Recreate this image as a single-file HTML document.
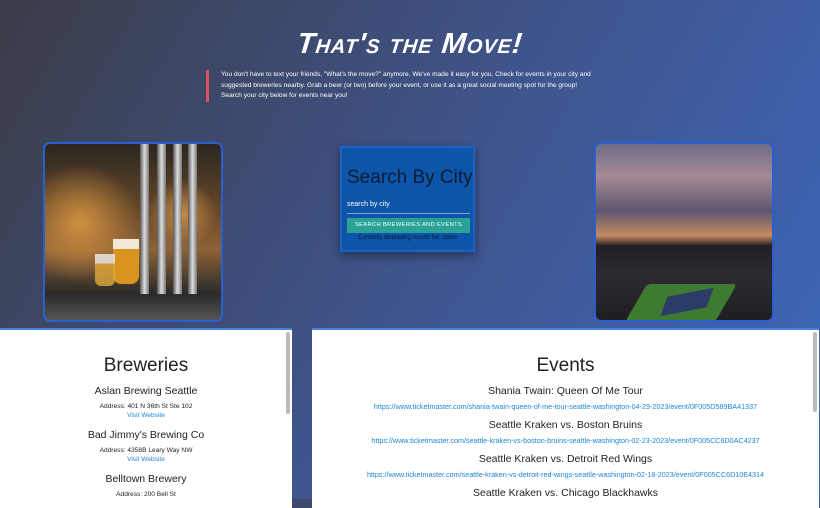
<!DOCTYPE html>
<html><head><style>
*{margin:0;padding:0;box-sizing:border-box}
body{width:820px;height:499px;overflow:hidden;font-family:"Liberation Sans",sans-serif;background:linear-gradient(120deg,#3b3d48 0%,#3f5285 45%,#3e68bf 100%);position:relative}
h1{position:absolute;top:28px;left:0;width:820px;text-align:center;color:#fff;font-size:29px;font-weight:bold;font-style:italic;font-variant:small-caps;letter-spacing:1px;transform:skewX(-6deg)}
.intro{position:absolute;left:206px;top:70px;width:388px;border-left:3px solid #d9525f;padding-left:12px;color:#fff;font-size:6.6px;line-height:10.5px}
.img{position:absolute;top:142px;width:180px;height:180px;border:2px solid #2a5fd0;border-radius:7px;overflow:hidden}
.beer{left:43px;background:radial-gradient(circle at 78% 40%,#c88a45 0,transparent 20%),radial-gradient(circle at 20% 45%,#d09040 0,transparent 35%),linear-gradient(180deg,#2b2620 0%,#6b4a2a 40%,#8d6236 60%,#2a2a2a 85%,#555 100%)}
.tap{position:absolute;top:0;height:150px;width:9px;background:linear-gradient(90deg,#555,#ddd,#777)}
.stad{left:594px;background:linear-gradient(180deg,#6e6c88 0%,#a68a96 18%,#5d5670 38%,#c58a60 52%,#201d25 58%,#2d2b30 75%,#1e1e22 100%)}
.search{position:absolute;left:340px;top:146px;width:135px;height:106px;background:#0d55a8;border:2px solid #1c62c8;box-shadow:0 4px 10px rgba(0,0,0,.4)}
.search h2{font-weight:normal;font-size:19px;color:#0d1c33;margin:19px 0 0 5px}
.search .in{font-size:7px;color:#fff;margin:12px 0 0 5px;padding-bottom:5px;border-bottom:1px solid #7fa2cf;width:123px}
.search .btn{margin:4px 0 0 5px;width:123px;height:15px;background:#2aa396;color:#fff;font-size:5.8px;text-align:center;line-height:15px;letter-spacing:.3px}
.search .cur{font-size:6px;color:#0d1c33;text-align:center;margin-top:2px}
.panel{position:absolute;top:328px;height:180px;background:#fff;border-top:2px solid #4a7fe0;text-align:center;color:#222}
.p1{left:0;width:292px}
.p2{left:312px;width:507px}
.sb{position:absolute;right:2px;top:2px;width:4px;height:82px;background:#bbb;border-radius:2px}
.panel h3{font-weight:normal;font-size:19px;margin-top:25px;margin-bottom:8px}
.name{font-size:10.5px;margin-bottom:6px}
.addr{font-size:6.6px;margin-bottom:2px}
.link{font-size:6.6px;color:#1d86d8;margin-bottom:10px}
.p2 .name{margin-bottom:5px}
.p2 .link{margin-bottom:8px;font-size:7.2px}
</style></head><body>
<h1>That's the Move!</h1>
<div class="intro">You don't have to text your friends, "What's the move?" anymore. We've made it easy for you. Check for events in your city and suggested breweries nearby. Grab a beer (or two) before your event, or use it as a great social meeting spot for the group! Search your city below for events near you!</div>
<div class="img beer"><div class="tap" style="left:95px"></div><div class="tap" style="left:112px"></div><div class="tap" style="left:128px"></div><div class="tap" style="left:143px"></div><div style="position:absolute;left:68px;top:95px;width:26px;height:45px;background:linear-gradient(#f1ead8 0 22%,#d8941f 22%);border-radius:0 0 8px 8px"></div><div style="position:absolute;left:50px;top:110px;width:20px;height:32px;background:linear-gradient(#eee 0 30%,#e0a93a 30%);opacity:.8;border-radius:0 0 6px 6px"></div></div>
<div class="img stad"><div style="position:absolute;left:40px;top:140px;width:90px;height:38px;background:#3f7a32;transform:skewX(-30deg);border-radius:4px"></div><div style="position:absolute;left:70px;top:148px;width:42px;height:20px;background:#2b3d66;transform:skewX(-30deg) rotate(-12deg)"></div></div>
<div class="search"><h2>Search By City</h2><div class="in">search by city</div><div class="btn">SEARCH BREWERIES AND EVENTS</div><div class="cur">Currently displaying results for: idaho</div></div>
<div class="panel p1"><div class="sb"></div><h3>Breweries</h3>
<div class="name">Aslan Brewing Seattle</div><div class="addr">Address: 401 N 36th St Ste 102</div><div class="link">Visit Website</div>
<div class="name">Bad Jimmy's Brewing Co</div><div class="addr">Address: 4358B Leary Way NW</div><div class="link">Visit Website</div>
<div class="name">Belltown Brewery</div><div class="addr">Address: 200 Bell St</div></div>
<div class="panel p2"><div class="sb" style="height:80px"></div><h3>Events</h3>
<div class="name">Shania Twain: Queen Of Me Tour</div><div class="link">https://www.ticketmaster.com/shania-twain-queen-of-me-tour-seattle-washington-04-29-2023/event/0F005D589BA41337</div>
<div class="name">Seattle Kraken vs. Boston Bruins</div><div class="link">https://www.ticketmaster.com/seattle-kraken-vs-boston-bruins-seattle-washington-02-23-2023/event/0F005CC6D0AC4237</div>
<div class="name">Seattle Kraken vs. Detroit Red Wings</div><div class="link">https://www.ticketmaster.com/seattle-kraken-vs-detroit-red-wings-seattle-washington-02-18-2023/event/0F005CC6D10E4314</div>
<div class="name">Seattle Kraken vs. Chicago Blackhawks</div></div>
</body></html>
